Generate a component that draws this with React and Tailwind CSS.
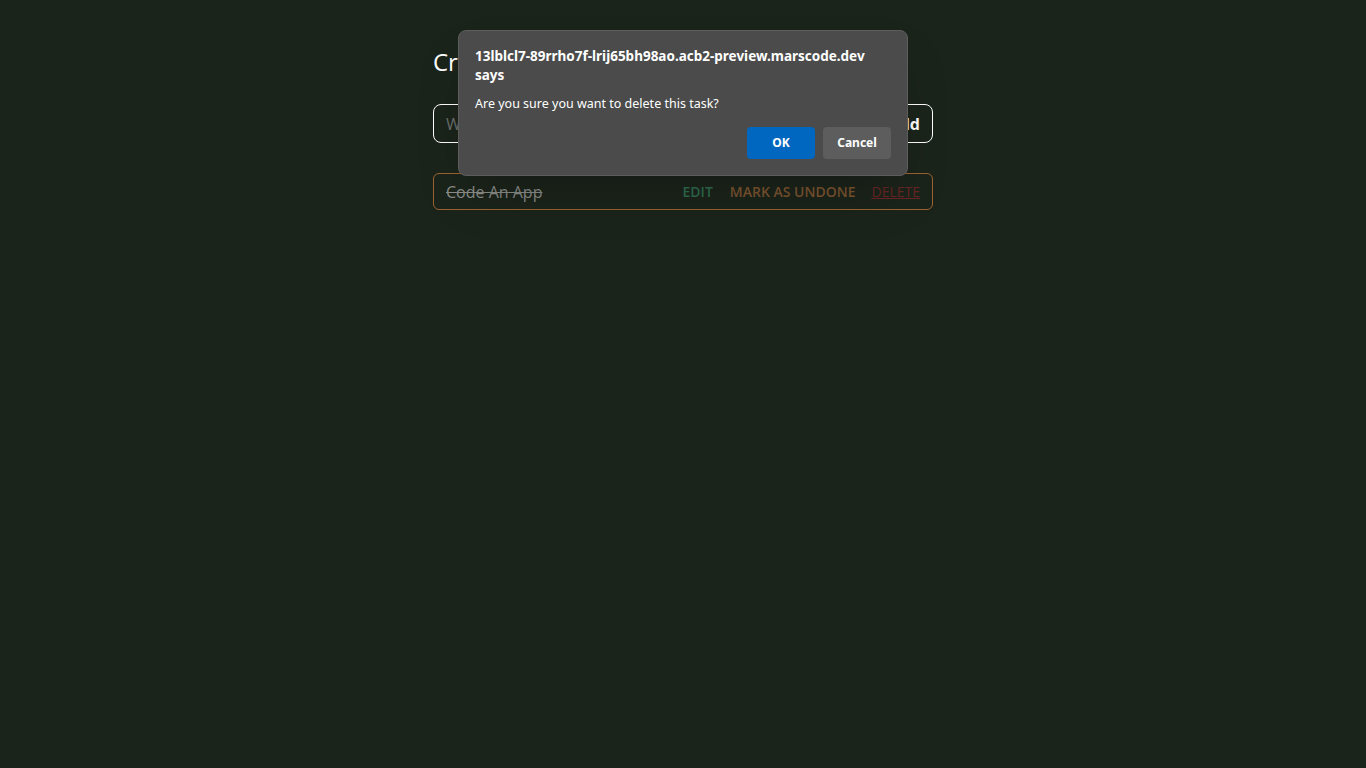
import React from 'react'

export default function App() {
    return (
        <div className="relative min-h-screen w-full bg-[#1b241b] font-['Open_Sans','Noto_Sans',sans-serif]">
            <div className="mx-auto w-[500px] pt-[46px]">
                <h1 className="text-[24px] leading-[32px] text-white">Create a Task</h1>
                <form className="mt-[26px] flex h-[39px] items-center rounded-lg border border-white px-3">
                    <input
                        className="flex-1 bg-transparent text-[16px] text-white placeholder-[#6b6f6b] outline-none"
                        placeholder="What do you need to do?"
                    />
                    <button type="button" className="text-[16px] font-bold text-white">Add</button>
                </form>
                <div className="mt-[30px] flex h-[37px] items-center rounded-md border border-[#9c6330] px-3">
                    <span className="flex-1 text-[16px] text-[#8a8d88] line-through">Code An App</span>
                    <div className="flex items-center text-[14px] font-semibold">
                        <button className="text-[#2f6c4f]">EDIT</button>
                        <button className="ml-[17px] text-[#7d5530]">MARK AS UNDONE</button>
                        <button className="ml-[16px] text-[#6a2424] underline font-normal">DELETE</button>
                    </div>
                </div>
            </div>

            <div className="absolute left-[458px] top-[30px] w-[450px] rounded-lg border border-[#5d5d5d] bg-[#4b4b4b] px-[16px] pb-[16px] pt-[16px] shadow-2xl font-['Noto_Sans','Open_Sans',sans-serif]">
                <div className="text-[13.5px] font-bold leading-[19px] text-white">
                    13lblcl7-89rrho7f-lrij65bh98ao.acb2-preview.marscode.dev
                    <br />
                    says
                </div>
                <p className="mt-[10px] text-[12.5px] leading-[18px] text-white">Are you sure you want to delete this task?</p>
                <div className="mt-[14px] flex justify-end gap-2">
                    <button className="h-[32px] w-[68px] rounded bg-[#0067c0] text-[12px] font-bold text-white">OK</button>
                    <button className="h-[32px] w-[68px] rounded bg-[#5d5d5d] text-[12px] font-bold text-white">Cancel</button>
                </div>
            </div>
        </div>
    )
}
